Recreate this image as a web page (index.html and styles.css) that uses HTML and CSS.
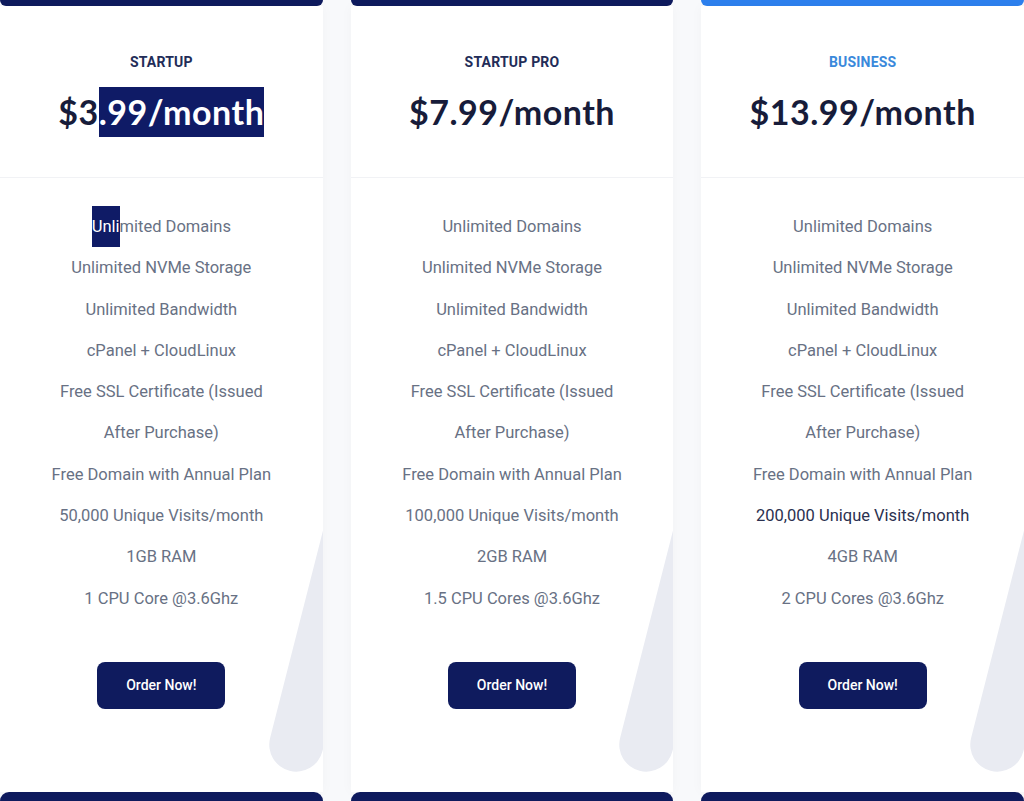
FILE: index.html
```html
<!DOCTYPE html>
<html lang="en">
<head>
<meta charset="utf-8">
<title>Hosting Plans</title>
<link rel="stylesheet" href="styles.css">
</head>
<body>
<div class="bars bars-top">
  <div class="bar"></div>
  <div class="bar"></div>
  <div class="bar bar-blue"></div>
</div>
<div class="plans">
  <div class="card">
    <div class="swoosh"></div>
    <div class="card-head">
      <div class="plan-name">STARTUP</div>
      <div class="price">$3<span class="sel">.99/month</span></div>
    </div>
    <ul class="features">
      <li><span class="sel">Unli</span>mited Domains</li>
      <li>Unlimited NVMe Storage</li>
      <li>Unlimited Bandwidth</li>
      <li>cPanel + CloudLinux</li>
      <li>Free SSL Certificate (Issued<br>After Purchase)</li>
      <li>Free Domain with Annual Plan</li>
      <li>50,000 Unique Visits/month</li>
      <li>1GB RAM</li>
      <li>1 CPU Core @3.6Ghz</li>
    </ul>
    <div class="cta"><a class="btn" href="#">Order Now!</a></div>
  </div>
  <div class="card">
    <div class="swoosh"></div>
    <div class="card-head">
      <div class="plan-name">STARTUP PRO</div>
      <div class="price">$7.99/month</div>
    </div>
    <ul class="features">
      <li>Unlimited Domains</li>
      <li>Unlimited NVMe Storage</li>
      <li>Unlimited Bandwidth</li>
      <li>cPanel + CloudLinux</li>
      <li>Free SSL Certificate (Issued<br>After Purchase)</li>
      <li>Free Domain with Annual Plan</li>
      <li>100,000 Unique Visits/month</li>
      <li>2GB RAM</li>
      <li>1.5 CPU Cores @3.6Ghz</li>
    </ul>
    <div class="cta"><a class="btn" href="#">Order Now!</a></div>
  </div>
  <div class="card">
    <div class="swoosh"></div>
    <div class="card-head">
      <div class="plan-name plan-name-blue">BUSINESS</div>
      <div class="price">$13.99/month</div>
    </div>
    <ul class="features">
      <li>Unlimited Domains</li>
      <li>Unlimited NVMe Storage</li>
      <li>Unlimited Bandwidth</li>
      <li>cPanel + CloudLinux</li>
      <li>Free SSL Certificate (Issued<br>After Purchase)</li>
      <li>Free Domain with Annual Plan</li>
      <li class="hl">200,000 Unique Visits/month</li>
      <li>4GB RAM</li>
      <li>2 CPU Cores @3.6Ghz</li>
    </ul>
    <div class="cta"><a class="btn" href="#">Order Now!</a></div>
  </div>
</div>
<div class="bars bars-bottom">
  <div class="bar"></div>
  <div class="bar"></div>
  <div class="bar"></div>
</div>
</body>
</html>
```
FILE: styles.css
```css
html, body {
  margin: 0;
  padding: 0;
  overflow: hidden;
}
body {
  background: #f8f9fb;
  font-family: Roboto, "Liberation Sans", Arial, sans-serif;
  width: 1024px;
  height: 801px;
}
.bars {
  display: flex;
  gap: 28px;
}
.bar {
  flex: 1;
  background: #0f1b5e;
}
.bar-blue {
  background: #2d80ee;
}
.bars-top .bar {
  height: 6px;
  border-radius: 0 0 8px 8px;
}
.bars-bottom .bar {
  height: 9px;
  border-radius: 9px 9px 0 0;
}
.plans {
  display: flex;
  gap: 28px;
  height: 786px;
}
.card {
  flex: 1;
  position: relative;
  overflow: hidden;
  background: #ffffff;
  box-shadow: 0 0 12px rgba(20, 30, 70, 0.03);
}
.swoosh {
  position: absolute;
  right: -43px;
  top: 371px;
  width: 54px;
  height: 400px;
  border-radius: 27px;
  background: #e9ebf2;
  transform: rotate(14.3deg);
}
.card-head {
  position: relative;
  padding: 46px 0 40px;
  text-align: center;
  border-bottom: 1px solid #f1f2f5;
}
.plan-name {
  font-size: 14px;
  font-weight: 700;
  line-height: 20px;
  color: #222c58;
  letter-spacing: 0.2px;
}
.plan-name-blue {
  color: #3a89db;
}
.price {
  margin-top: 15px;
  font-family: Lato, "DejaVu Sans", sans-serif;
  font-size: 34px;
  font-weight: 700;
  line-height: 50px;
  letter-spacing: 0.5px;
  color: #171c3a;
}
.sel {
  display: inline-block;
  background: #0f1b66;
  color: #ffffff;
}
.features {
  position: relative;
  list-style: none;
  margin: 0;
  padding: 28px 0 0;
  text-align: center;
  font-size: 16.5px;
  line-height: 41.3px;
  color: #687184;
}
.hl {
  color: #2b3150;
}
.cta {
  position: relative;
  display: flex;
  justify-content: center;
  margin-top: 43px;
}
.btn {
  display: flex;
  align-items: center;
  justify-content: center;
  width: 128px;
  height: 47px;
  border-radius: 8px;
  background: #0f1b5e;
  color: #ffffff;
  font-size: 14px;
  font-weight: 500;
  text-decoration: none;
}
```
